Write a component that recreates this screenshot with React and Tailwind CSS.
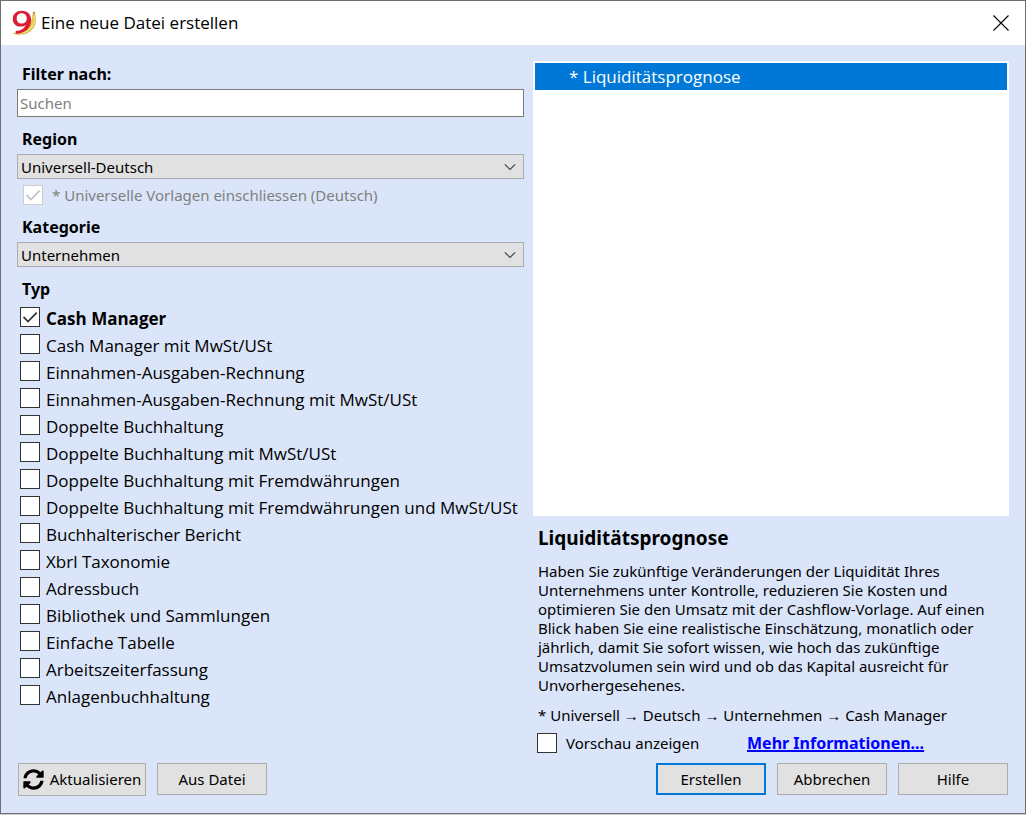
import { useState } from 'react';

const TYPES = [
  'Cash Manager',
  'Cash Manager mit MwSt/USt',
  'Einnahmen-Ausgaben-Rechnung',
  'Einnahmen-Ausgaben-Rechnung mit MwSt/USt',
  'Doppelte Buchhaltung',
  'Doppelte Buchhaltung mit MwSt/USt',
  'Doppelte Buchhaltung mit Fremdwährungen',
  'Doppelte Buchhaltung mit Fremdwährungen und MwSt/USt',
  'Buchhalterischer Bericht',
  'Xbrl Taxonomie',
  'Adressbuch',
  'Bibliothek und Sammlungen',
  'Einfache Tabelle',
  'Arbeitszeiterfassung',
  'Anlagenbuchhaltung',
];

function Logo() {
  return (
    <svg viewBox="0 0 26 26" className="h-[26px] w-[26px]" aria-hidden="true">
      <path d="M23 2.500c2.600 5.600 2 12.400-1.800 16.700-4.400 5-11.600 6.200-18.800 4.200 6-.2 11.200-2.400 14.600-6.600 3.400-4.200 5.200-9 5.200-14.300z" fill="#e6cf52" stroke="#c9a93a" strokeWidth=".7" />
      <path d="M23.400 6c.7 4.600-.7 9-3.500 12.200-3 3.400-7.400 4.800-12.300 4.900" fill="none" stroke="#f5ea98" strokeWidth="1" />
      <path d="M22.600 1.500l1.100 0 .2 2-1.300.2z" fill="#8a7a34" />
      <path
        fillRule="evenodd"
        d="M10.800.8c5.800 0 9.300 3.500 9.300 9.200 0 8-5.300 13.400-15.300 13.800v-2.700c5.400-.4 8.600-2.500 9.900-6-1.300 1-3 1.500-5 1.500-4.700 0-7.900-3.100-7.900-7.700C1.800 4 5.500.8 10.800.8zM10.700 3.300C7.700 3.300 5.700 5.400 5.700 8.500s2 5.100 4.900 5.100c3 0 5.200-2 5.200-5.100s-2-5.200-5.100-5.200z"
        fill="#dc1f35"
      />
    </svg>
  );
}

function CheckBox({ id, checked, onChange, disabled = false }) {
  return (
    <span className="grid h-5 w-5 shrink-0">
      <input
        id={id}
        type="checkbox"
        checked={checked}
        onChange={onChange}
        disabled={disabled}
        className="col-start-1 row-start-1 h-5 w-5 appearance-none border border-[#333333] bg-white disabled:border-[#cccccc]"
      />
      {checked && (
        <svg
          viewBox="0 0 20 20"
          fill="none"
          strokeWidth="1.7"
          className={
            disabled
              ? 'pointer-events-none col-start-1 row-start-1 h-5 w-5 stroke-[#c4c4c4]'
              : 'pointer-events-none col-start-1 row-start-1 h-5 w-5 stroke-[#333333]'
          }
        >
          <path d="M3.500 9.800l4.500 4.700L16.700 5.600" />
        </svg>
      )}
    </span>
  );
}

function Select({ id, options }) {
  return (
    <div className="grid">
      <select
        id={id}
        className="col-start-1 row-start-1 h-[25px] w-full appearance-none border border-[#adadad] bg-[#e1e1e1] pl-[3px] text-[15px] leading-[22px]"
      >
        {options.map((o) => (
          <option key={o}>{o}</option>
        ))}
      </select>
      <svg
        viewBox="0 0 12 8"
        fill="none"
        stroke="#444444"
        strokeWidth="1.200"
        className="pointer-events-none col-start-1 row-start-1 mr-2 h-2 w-3 self-center justify-self-end"
      >
        <path d="M.8 1.300L6 6.500l5.200-5.200" />
      </svg>
    </div>
  );
}

const HEADING = 'mb-1 pl-[5px] text-base leading-[22px] font-bold';
const BUTTON = 'flex items-center justify-center bg-[#e1e1e1] text-[15px]';

export default function App() {
  const [selected, setSelected] = useState([0]);
  const [preview, setPreview] = useState(false);
  const toggle = (i) =>
    setSelected((s) => (s.includes(i) ? s.filter((n) => n !== i) : [...s, i]));

  return (
    <div className="flex min-h-screen flex-col bg-[#d0d0d0] pb-px font-['Noto_Sans','Liberation_Sans',sans-serif] text-black">
      <div className="flex flex-1 flex-col border border-[#6e6e6e] bg-[#dbe5f9]">
        <header className="flex h-11 items-center justify-between bg-white pr-4 pl-[10px]">
          <div className="flex items-center gap-1">
            <Logo />
            <h1 className="font-['Open_Sans',sans-serif] text-[17px]">Eine neue Datei erstellen</h1>
          </div>
          <button type="button" aria-label="Schliessen">
            <svg viewBox="0 0 16 16" fill="none" stroke="#000" strokeWidth="1.100" className="h-4 w-4">
              <path d="M.5.5l15 15M15.500.5l-15 15" />
            </svg>
          </button>
        </header>

        <main className="flex flex-1 flex-col gap-[9px] px-4 pt-4 pb-[17px]">
          <div className="grid flex-1 grid-cols-[507fr_476fr] gap-[9px]">
            <form className="flex min-w-0 flex-col pt-[2px]">
              <label htmlFor="search" className={HEADING}>
                Filter nach:
              </label>
              <input
                id="search"
                type="text"
                placeholder="Suchen"
                className="h-7 border border-[#7a7a7a] bg-white pl-[2px] text-[15px] placeholder:text-[#808080]"
              />
              <label htmlFor="region" className={`${HEADING} mt-[11px]`}>
                Region
              </label>
              <Select id="region" options={['Universell-Deutsch']} />
              <div className="flex h-8 items-center gap-[9px] pl-[6px]">
                <CheckBox id="universal" checked disabled />
                <label htmlFor="universal" className="text-[15px] text-[#808080]">
                  * Universelle Vorlagen einschliessen (Deutsch)
                </label>
              </div>
              <label htmlFor="category" className={`${HEADING} mt-[5px]`}>
                Kategorie
              </label>
              <Select id="category" options={['Unternehmen']} />
              <fieldset className="mt-[11px] min-w-0">
                <legend className={HEADING}>Typ</legend>
                {TYPES.map((t, i) => (
                  <div
                    key={t}
                    className="flex h-[27px] items-start gap-[6px] pt-[3px] pl-[3px] font-['Open_Sans',sans-serif]"
                  >
                    <CheckBox id={`type-${i}`} checked={selected.includes(i)} onChange={() => toggle(i)} />
                    <label
                      htmlFor={`type-${i}`}
                      className={
                        selected.includes(i)
                          ? 'text-[17px] leading-6 font-bold whitespace-nowrap'
                          : 'text-[17px] leading-6 whitespace-nowrap'
                      }
                    >
                      {t}
                    </label>
                  </div>
                ))}
              </fieldset>
            </form>

            <section className="flex min-w-0 flex-col">
              <ul className="flex-1 bg-white p-[2px]">
                <li className="bg-[#0078d7] pl-[34px] font-['Open_Sans',sans-serif] text-[17px] leading-[27px] text-white">
                  * Liquiditätsprognose
                </li>
              </ul>
              <h2 className="pl-[5px] text-[19px] leading-[44px] font-bold">Liquiditätsprognose</h2>
              <p className="mt-[2px] pl-[5px] text-[15px] leading-[19px] whitespace-nowrap">
                Haben Sie zukünftige Veränderungen der Liquidität Ihres
                <br />
                Unternehmens unter Kontrolle, reduzieren Sie Kosten und
                <br />
                optimieren Sie den Umsatz mit der Cashflow-Vorlage. Auf einen
                <br />
                Blick haben Sie eine realistische Einschätzung, monatlich oder
                <br />
                jährlich, damit Sie sofort wissen, wie hoch das zukünftige
                <br />
                Umsatzvolumen sein wird und ob das Kapital ausreicht für
                <br />
                Unvorhergesehenes.
              </p>
              <p className="mt-[11px] pl-[5px] text-[15px] leading-[19px]">
                * Universell → Deutsch → Unternehmen → Cash Manager
              </p>
              <div className="mt-[7px] flex h-[22px] items-center pl-1">
                <CheckBox id="preview" checked={preview} onChange={() => setPreview(!preview)} />
                <label htmlFor="preview" className="w-[181px] pl-[9px] text-[15px]">
                  Vorschau anzeigen
                </label>
                <a href="#info" className="ml-[9px] text-base leading-[22px] font-bold text-[#0000ff] underline decoration-2">
                  Mehr Informationen...
                </a>
              </div>
            </section>
          </div>

          <footer className="flex items-start justify-between pr-px pl-px">
            <div className="flex items-start gap-[11px]">
              <button type="button" className={`${BUTTON} h-[33px] w-32 gap-[6px] border border-[#adadad]`}>
                <svg viewBox="0 0 512 512" className="h-[21px] w-[21px]" aria-hidden="true">
                  <path d="M370.720 133.280C339.458 104.008 298.888 87.962 255.848 88c-77.458.068-144.328 53.178-162.791 126.850-1.344 5.363-6.122 9.150-11.651 9.150H24.103c-7.498 0-13.194-6.807-11.807-14.176C33.933 94.924 134.813 8 256 8c66.448 0 126.791 26.136 171.315 68.685L463.030 40.970C478.149 25.851 504 36.559 504 57.941V192c0 13.255-10.745 24-24 24H345.941c-21.382 0-32.090-25.851-16.971-40.971l41.750-41.749zM32 296h134.059c21.382 0 32.090 25.851 16.971 40.971l-41.750 41.750c31.262 29.273 71.835 45.319 114.876 45.280 77.418-.070 144.315-53.144 162.787-126.849 1.344-5.363 6.122-9.150 11.651-9.150h57.304c7.498 0 13.194 6.807 11.807 14.176C478.067 417.076 377.187 504 256 504c-66.448 0-126.791-26.136-171.315-68.685L48.970 471.030C33.851 486.149 8 475.441 8 454.059V320c0-13.255 10.745-24 24-24z" />
                </svg>
                Aktualisieren
              </button>
              <button type="button" className={`${BUTTON} h-8 w-[110px] border border-[#adadad]`}>Aus Datei</button>
            </div>
            <div className="flex items-start gap-[11px]">
              <button type="button" className={`${BUTTON} h-8 w-[110px] border-2 border-[#0078d7]`}>Erstellen</button>
              <button type="button" className={`${BUTTON} h-8 w-[110px] border border-[#adadad]`}>Abbrechen</button>
              <button type="button" className={`${BUTTON} h-8 w-[110px] border border-[#adadad]`}>Hilfe</button>
            </div>
          </footer>
        </main>
      </div>
    </div>
  );
}
